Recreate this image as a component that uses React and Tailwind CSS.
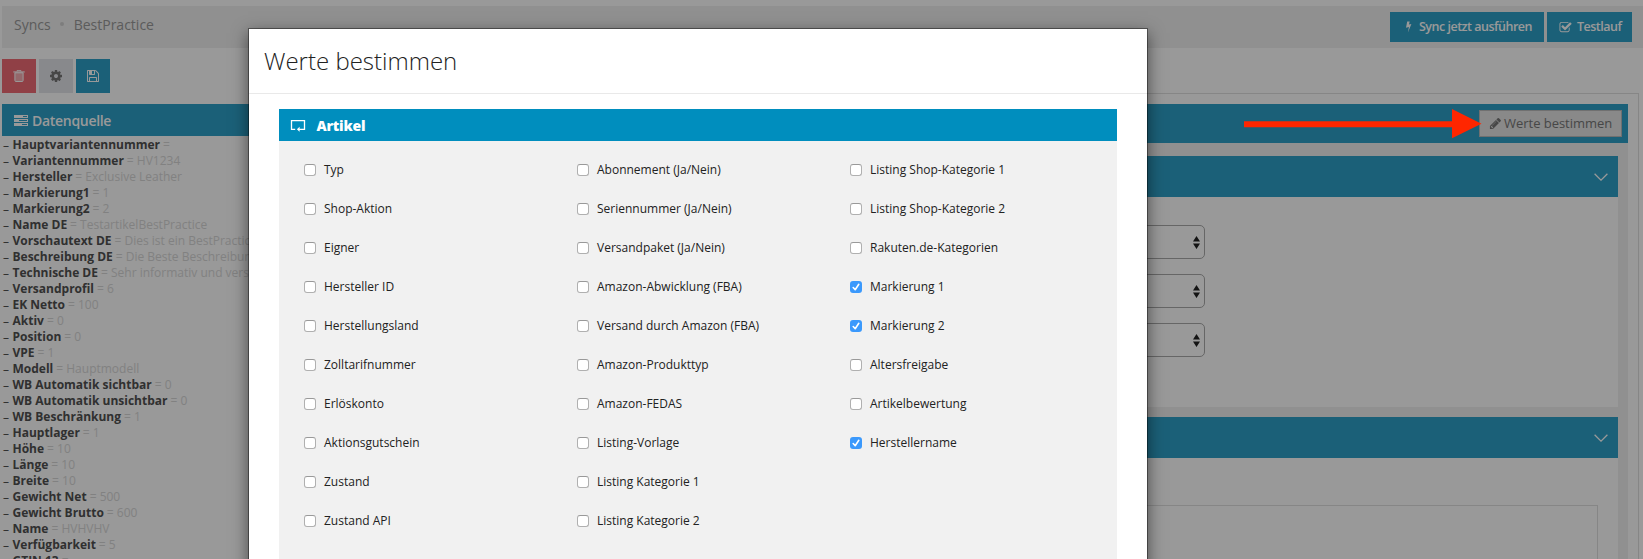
import React from 'react';

const SOURCE_FIELDS = [
  ['Hauptvariantennummer', ''],
  ['Variantennummer', 'HV1234'],
  ['Hersteller', 'Exclusive Leather'],
  ['Markierung1', '1'],
  ['Markierung2', '2'],
  ['Name DE', 'TestartikelBestPractice'],
  ['Vorschautext DE', 'Dies ist ein BestPractice Artikel'],
  ['Beschreibung DE', 'Die Beste Beschreibung'],
  ['Technische DE', 'Sehr informativ und verständlich'],
  ['Versandprofil', '6'],
  ['EK Netto', '100'],
  ['Aktiv', '0'],
  ['Position', '0'],
  ['VPE', '1'],
  ['Modell', 'Hauptmodell'],
  ['WB Automatik sichtbar', '0'],
  ['WB Automatik unsichtbar', '0'],
  ['WB Beschränkung', '1'],
  ['Hauptlager', '1'],
  ['Höhe', '10'],
  ['Länge', '10'],
  ['Breite', '10'],
  ['Gewicht Net', '500'],
  ['Gewicht Brutto', '600'],
  ['Name', 'HVHVHV'],
  ['Verfügbarkeit', '5'],
  ['GTIN 13', ''],
];

const OPTION_COLUMNS = [
  ['Typ', 'Shop-Aktion', 'Eigner', 'Hersteller ID', 'Herstellungsland', 'Zolltarifnummer', 'Erlöskonto', 'Aktionsgutschein', 'Zustand', 'Zustand API'],
  ['Abonnement (Ja/Nein)', 'Seriennummer (Ja/Nein)', 'Versandpaket (Ja/Nein)', 'Amazon-Abwicklung (FBA)', 'Versand durch Amazon (FBA)', 'Amazon-Produkttyp', 'Amazon-FEDAS', 'Listing-Vorlage', 'Listing Kategorie 1', 'Listing Kategorie 2'],
  ['Listing Shop-Kategorie 1', 'Listing Shop-Kategorie 2', 'Rakuten.de-Kategorien', 'Markierung 1', 'Markierung 2', 'Altersfreigabe', 'Artikelbewertung', 'Herstellername'],
];

const CHECKED = new Set(['Markierung 1', 'Markierung 2', 'Herstellername']);

function Glyph({ d, className }) {
  return (
    <svg viewBox="0 0 1792 1792" fill="currentColor" className={className}>
      <path d={d} />
    </svg>
  );
}

const COG = 'M1152 896q0-106-75-181t-181-75-181 75-75 181 75 181 181 75 181-75 75-181zm512-109v222q0 12-8 23t-20 13l-185 28q-19 54-39 91 35 50 107 138 10 12 10 25t-9 23q-27 37-99 108t-94 71q-12 0-26-9l-138-108q-44 23-91 38-16 136-29 186-7 28-36 28h-222q-14 0-24.500-8.500t-11.500-21.500l-28-184q-49-16-90-37l-141 107q-10 9-25 9-14 0-25-11-126-114-165-168-7-10-7-23 0-12 8-23 15-21 51-66.500t54-70.500q-27-50-41-99l-183-27q-13-2-21-12.500t-8-23.500v-222q0-12 8-23t19-13l186-28q14-46 39-92-40-57-107-138-10-12-10-24 0-10 9-23 26-36 98.500-107.500t94.500-71.500q13 0 26 10l138 107q44-23 91-38 16-136 29-186 7-28 36-28h222q14 0 24.500 8.500t11.500 21.500l28 184q49 16 90 37l142-107q9-9 24-9 13 0 25 10 129 119 165 170 7 8 7 22 0 12-8 23-15 21-51 66.500t-54 70.500q26 50 41 98l183 28q13 2 21 12.500t8 23.500z';
const FLOPPY = 'M512 1536h768v-384h-768v384zm896 0h128v-896q0-14-10-38.500t-20-34.500l-281-281q-10-10-34-20t-39-10v416q0 40-28 68t-68 28h-576q-40 0-68-28t-28-68v-416h-128v1280h128v-416q0-40 28-68t68-28h832q40 0 68 28t28 68v416zm-384-928v-320q0-13-9.500-22.500t-22.500-9.500h-192q-13 0-22.500 9.500t-9.500 22.500v320q0 13 9.500 22.500t22.500 9.500h192q13 0 22.500-9.500t9.500-22.500zm640 32v928q0 40-28 68t-68 28h-1344q-40 0-68-28t-28-68v-1344q0-40 28-68t68-28h928q40 0 88 20t76 48l280 280q28 28 48 76t20 88z';
const CHECK_SQUARE = 'M1472 930v318q0 119-84.500 203.500t-203.500 84.500h-832q-119 0-203.500-84.500t-84.500-203.500v-832q0-119 84.500-203.500t203.500-84.500h832q63 0 117 25 15 7 18 23 3 17-9 29l-49 49q-10 10-23 10-3 0-9-2-23-6-45-6h-832q-66 0-113 47t-47 113v832q0 66 47 113t113 47h832q66 0 113-47t47-113v-254q0-13 9-22l64-64q10-10 23-10 6 0 12 3 20 8 20 29zm231-489l-814 814q-24 24-57 24t-57-24l-430-430q-24-24-24-57t24-57l110-110q24-24 57-24t57 24l263 263 647-647q24-24 57-24t57 24l110 110q24 24 24 57t-24 57z';
const PENCIL = 'M491 1536l91-91-235-235-91 91v107h128v128h107zm523-928q0-22-22-22-10 0-17 7l-542 542q-7 7-7 17 0 22 22 22 10 0 17-7l542-542q7-7 7-17zm-54-192l416 416-832 832h-416v-416zm683 96q0 53-37 90l-166 166-416-416 166-165q36-38 90-38 53 0 91 38l235 234q37 39 37 91z';

function TrashIcon() {
  return (
    <svg viewBox="0 0 12 12" className="h-3 w-3">
      <path d="M4 1.500V.6h4v.9" fill="none" stroke="#fff" strokeWidth=".9" />
      <path d="M.3 1.400h11.400v1.100H.3z" fill="#fff" />
      <path d="M1.900 2.800h8.200v7.700q0 1-1 1H2.900q-1 0-1-1z" fill="#fff" fillOpacity=".45" stroke="#fff" />
    </svg>
  );
}

function TasksIcon() {
  return (
    <svg viewBox="0 0 14 11" className="h-[11px] w-[14px]">
      <path d="M0 0h14v3H0zM0 4h14v3H0zM0 8h14v3H0z" fill="#fff" />
      <path d="M9 1h4v1H9zM5 5h8v1H5zM8 9h5v1H8z" fill="#2da0c8" />
    </svg>
  );
}

function BoltIcon() {
  return (
    <svg viewBox="0 0 7 12" className="h-3 w-[7px]">
      <path d="M2.200.5h2.500L3.900 3.600l2.500-.6L2.900 11.500l1-5.500-2.900.7z" fill="#fff" />
    </svg>
  );
}

function ReturnFrameIcon() {
  return (
    <svg viewBox="0 0 16 13" fill="none" stroke="#fff" className="h-[13px] w-4">
      <path d="M5.200 10.300H1.500V1.600h13v8.700H9" strokeWidth="1.300" />
      <path d="M9.600 7.800 6.900 10.300l2.700 2.400z" fill="#fff" stroke="none" />
    </svg>
  );
}

function CardHeader() {
  return (
    <div className="flex h-[41px] items-center justify-end bg-[#2da0c8] pr-[10px]">
      <svg viewBox="0 0 14 8" className="h-2 w-[14px]" fill="none" stroke="#fff" strokeWidth="1.300">
        <path d="M.6.7 7 7.100 13.400.7" />
      </svg>
    </div>
  );
}

function SelectBox() {
  return (
    <div className="flex h-[34px] w-[400px] items-center justify-end rounded-[5px] border border-[#aaa] bg-white pr-1">
      <svg viewBox="0 0 7 13" className="h-[13px] w-[7px]" fill="#222">
        <path d="M3.500 0 7 5.500H0zM0 7.500h7L3.500 13z" />
      </svg>
    </div>
  );
}

function Checkbox({ checked }) {
  return checked ? (
    <span className="flex h-3 w-3 items-center justify-center rounded-[3px] bg-[#3b99fc]">
      <svg viewBox="0 0 12 12" className="h-3 w-3" fill="none" stroke="#fff" strokeWidth="1.600" strokeLinecap="round" strokeLinejoin="round">
        <path d="M3.200 6.500 5.200 8.700 8.800 3.300" />
      </svg>
    </span>
  ) : (
    <span className="h-3 w-3 rounded-[3px] border border-[#b0b0b0] border-t-[#999] bg-white" />
  );
}

function Modal() {
  return (
    <div className="absolute left-[248px] top-7 h-[600px] w-[900px] border border-black/40 bg-white bg-clip-padding shadow-[0_5px_15px_rgba(0,0,0,0.5)]">
      <div className="h-[65px] border-b border-[#e9e9e9] pl-[15px] pt-[14px]">
        <h4 className="text-[24px] font-light leading-9 text-[#222]">Werte bestimmen</h4>
      </div>
      <div className="mx-[30px] mt-[15px] h-[560px] bg-[#f1f1f1]">
        <div className="flex h-8 items-center bg-[#008ebe] pl-[11px] text-white">
          <ReturnFrameIcon />
          <span className="ml-[10.500px] text-[14px] font-extrabold tracking-[-0.2px]">Artikel</span>
        </div>
        <div className="flex pl-[25px] pt-[9px]">
          {OPTION_COLUMNS.map((column) => (
            <div key={column[0]} className="w-[273px] shrink-0">
              {column.map((label) => (
                <label key={label} className="flex h-[39px] items-center gap-2">
                  <Checkbox checked={CHECKED.has(label)} />
                  <span className="text-[12px] text-[#222]">{label}</span>
                </label>
              ))}
            </div>
          ))}
        </div>
      </div>
    </div>
  );
}

export default function App() {
  return (
    <div className="relative h-[559px] w-[1643px] overflow-hidden bg-white font-['Open_Sans',sans-serif]">
      <header className="ml-[2px] mt-[6px] flex h-[42px] justify-between bg-[#f0f0f0] pl-3 pr-[11px] pt-[6px]">
        <nav className="flex h-6 items-center text-[14px] text-[#999]">
          <span>Syncs</span>
          <span className="mx-[9.500px] h-1 w-1 rounded-full bg-[#d0d0d0]" />
          <span>BestPractice</span>
        </nav>
        <div className="flex gap-[3px] text-[12.500px] font-semibold tracking-[-0.5px] text-white">
          <div className="flex h-[30px] w-[154px] items-center bg-[#2da0c8] pl-[15px]">
            <BoltIcon />
            <span className="ml-[7px] whitespace-nowrap">Sync jetzt ausführen</span>
          </div>
          <div className="flex h-[30px] w-[85px] items-center bg-[#2da0c8] pl-[12px]">
            <Glyph d={CHECK_SQUARE} className="h-[13px] w-[13px]" />
            <span className="ml-[5px]">Testlauf</span>
          </div>
        </div>
      </header>

      <div className="flex pl-[2px]">
        <aside className="w-[300px] shrink-0 pt-[11px]">
          <div className="flex gap-[3px]">
            <span className="flex h-[34px] w-[34px] items-center justify-center bg-[#f06b75]"><TrashIcon /></span>
            <span className="flex h-[34px] w-[34px] items-center justify-center bg-[#e3e4ea] text-[#777]"><Glyph d={COG} className="h-[14px] w-[14px]" /></span>
            <span className="flex h-[34px] w-[34px] items-center justify-center bg-[#2da0c8] text-white"><Glyph d={FLOPPY} className="h-[14px] w-[14px]" /></span>
          </div>
          <div className="mt-[11px] flex h-8 items-center gap-1 bg-[#2da0c8] pl-3 text-[14px] font-semibold text-white">
            <TasksIcon />
            <span className="tracking-[-0.3px]">Datenquelle</span>
          </div>
          <ul className="pt-px text-[12px] text-[#d8d8d8]">
            {SOURCE_FIELDS.map(([name, value]) => (
              <li key={name} className="flex h-4 items-center whitespace-nowrap pl-px">
                <span className="mr-[3.500px] mt-[2px] w-[6px] text-[#505050]">–</span>
                <b className="font-bold text-[#505050]">{name}</b>
                <span className="ml-[3px]">= {value}</span>
              </li>
            ))}
          </ul>
        </aside>

        <main className="mt-[45px] h-[600px] w-[1337px] border border-[#dfdfdf] pl-[10px] pr-[10px] pt-[10px]">
          <div className="flex h-[39px] items-center justify-end bg-[#2da0c8] pr-[6px]">
            <div className="flex h-[27px] w-[143px] items-center border border-[#bbb] bg-[#e4e4e4] pl-[9px] text-[#777]">
              <Glyph d={PENCIL} className="h-[13px] w-[13px]" />
              <span className="ml-[2px] whitespace-nowrap text-[13px] tracking-[-0.03px]">Werte bestimmen</span>
            </div>
          </div>
          <div className="h-[520px] bg-[#f0f0f0] px-[10px] pt-[13px]">
            <CardHeader />
            <div className="flex h-[210px] flex-col gap-[15px] bg-white pl-[482px] pt-[28px]">
              <SelectBox />
              <SelectBox />
              <SelectBox />
            </div>
            <div className="mt-[10px]">
              <CardHeader />
              <div className="h-[200px] bg-white px-5 pt-[47px]">
                <div className="h-[150px] border border-[#e0e0e0]" />
              </div>
            </div>
          </div>
        </main>
      </div>

      <div className="absolute inset-0 bg-black/40" />
      <Modal />
      <svg viewBox="0 0 238 30" className="absolute left-[1244px] top-[109px] h-[30px] w-[238px]" fill="#ff2600">
        <path d="M0 12.200h208V0l29.500 14.800L208 29.200V18.200H0z" />
      </svg>
    </div>
  );
}
